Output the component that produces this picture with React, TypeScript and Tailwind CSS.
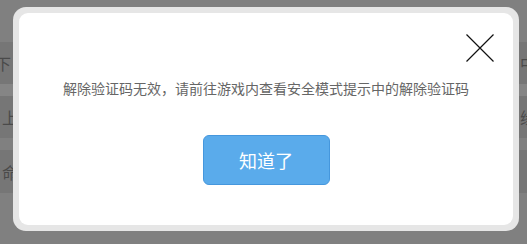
import React from "react";

const font = { fontFamily: '"Noto Sans CJK SC", "Noto Sans", sans-serif' };

export default function App() {
  return (
    <div
      className="relative w-[527px] h-[244px] overflow-hidden bg-[#808080]"
      style={font}
    >
      {/* background page (dimmed) */}
      <div className="flex flex-col pt-[42px]">
        <div className="flex h-[42px] items-center justify-between bg-[#767676] text-[16px] text-[#4a4a4a]">
          <span className="ml-[-5px]">下</span>
          <span className="mr-[-9px]">中</span>
        </div>
        <div className="h-[12px] bg-[#858585]" />
        <div className="flex h-[42px] items-center justify-between bg-[#767676] text-[16px] text-[#4a4a4a]">
          <span className="ml-[2px]">上</span>
          <span className="mr-[-9px]">缘</span>
        </div>
        <div className="h-[12px] bg-[#808080]" />
        <div className="flex h-[43px] items-center justify-between bg-[#767676] text-[16px] text-[#4a4a4a]">
          <span className="ml-[2px]">命</span>
          <span />
        </div>
      </div>

      {/* modal */}
      <div className="absolute left-[13px] top-[7px] w-[506px] h-[224px] rounded-[13px] bg-[#e6e6e6] p-[6px]">
        <div className="relative flex h-full flex-col items-center rounded-[9px] bg-white pt-[65px]">
          <button className="absolute left-[447px] top-[21px] h-[28px] w-[28px]">
            <svg width="28" height="28" viewBox="0 0 28 28">
              <path d="M0.5 0.5 L27.5 27.5 M27.5 0.5 L0.5 27.5" stroke="#111" strokeWidth="1.2" />
            </svg>
          </button>
          <p className="text-[14px] leading-[20px] text-[#666666]">
            解除验证码无效，请前往游戏内查看安全模式提示中的解除验证码
          </p>
          <button className="mt-[37px] flex h-[50px] w-[127px] items-center justify-center rounded-[6px] border border-[#4597dd] bg-[#5aabeb] text-[18px] text-white">
            知道了
          </button>
        </div>
      </div>
    </div>
  );
}
